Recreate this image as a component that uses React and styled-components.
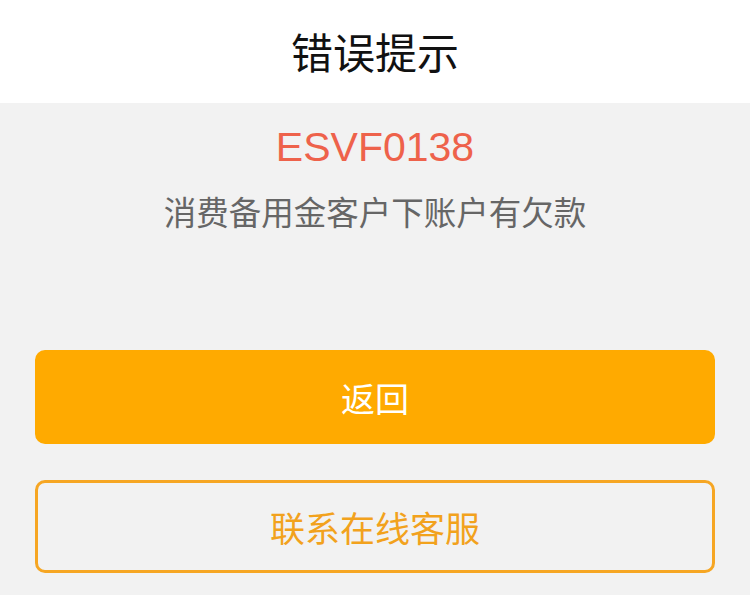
import { styled, createGlobalStyle } from "styled-components";

const Global = createGlobalStyle`
  html, body {
    margin: 0;
    padding: 0;
    background: #f2f2f2;
  }
  body {
    font-family: "Liberation Sans", "Noto Sans CJK SC", sans-serif;
  }
`;

function App() {
  return (
    <Page>
      <Global />
      <Header>
        <h1>错误提示</h1>
      </Header>
      <Content>
        <Code>ESVF0138</Code>
        <Message>消费备用金客户下账户有欠款</Message>
        <Actions>
          <Button $primary>返回</Button>
          <Button>联系在线客服</Button>
        </Actions>
      </Content>
    </Page>
  );
}

const Page = styled.div`
  width: 750px;
  min-height: 595px;
  background: #f2f2f2;
`;

const Header = styled.div`
  height: 103px;
  background: #fff;
  display: flex;
  align-items: center;
  justify-content: center;

  h1 {
    margin: 0;
    font-family: "Noto Sans CJK SC", sans-serif;
    font-size: 42px;
    font-weight: 400;
    color: #111;
    padding-bottom: 2px;
  }
`;

const Content = styled.div`
  padding: 19px 35px 0;
  display: flex;
  flex-direction: column;
  align-items: center;
`;

const Code = styled.div`
  font-family: "Liberation Sans", sans-serif;
  font-size: 41px;
  line-height: 50px;
  color: #ee624b;
`;

const Message = styled.div`
  margin-top: 16px;
  font-family: "Noto Sans CJK SC", sans-serif;
  font-size: 32.5px;
  line-height: 46px;
  color: #666;
`;

const Actions = styled.div`
  width: 100%;
  margin-top: 116px;
  display: flex;
  flex-direction: column;
  gap: 36px;
`;

const Button = styled.button`
  box-sizing: border-box;
  width: 100%;
  height: ${(p) => (p.$primary ? "94px" : "93px")};
  border-radius: 10px;
  border: 3px solid ${(p) => (p.$primary ? "#ffaa00" : "#f6a623")};
  background: ${(p) => (p.$primary ? "#ffaa00" : "transparent")};
  color: ${(p) => (p.$primary ? "#fff" : "#f2a21d")};
  font-family: "Noto Sans CJK SC", sans-serif;
  font-size: ${(p) => (p.$primary ? "34px" : "35px")};
  display: flex;
  align-items: center;
  justify-content: center;
  padding: 0;
  cursor: pointer;
`;

export default App;
